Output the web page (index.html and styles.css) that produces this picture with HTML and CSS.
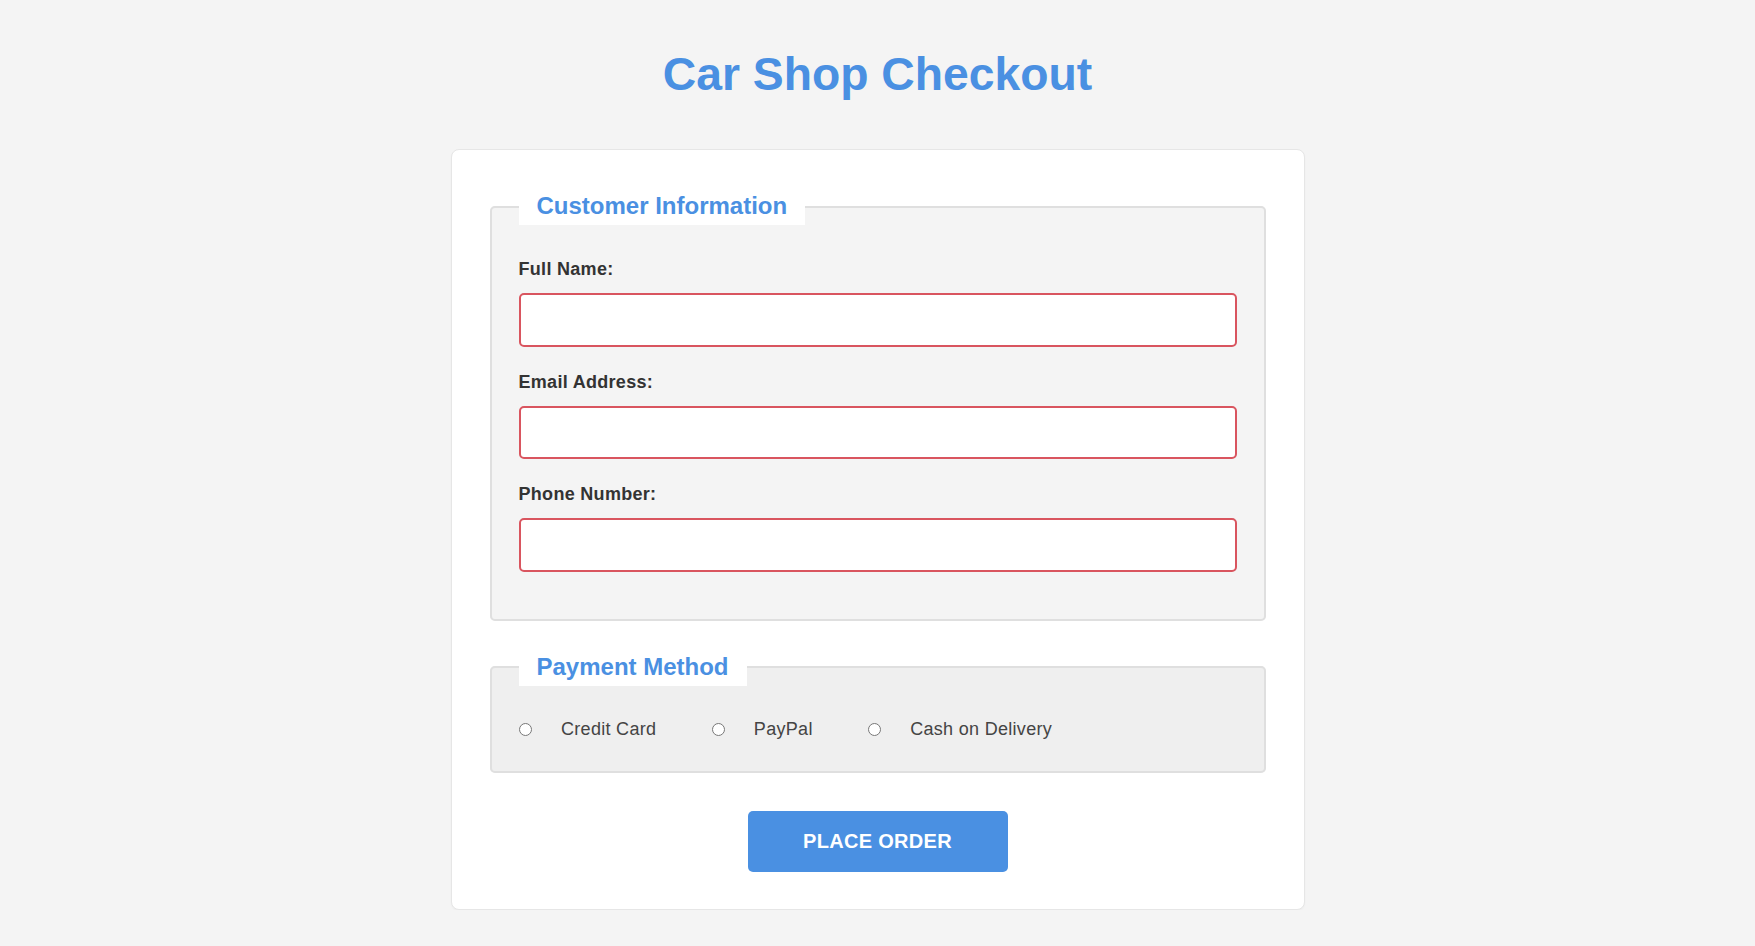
FILE: index.html
```html
<!DOCTYPE html>
<html lang="en">
<head>
<meta charset="utf-8">
<title>Car Shop Checkout</title>
<link rel="stylesheet" href="styles.css">
</head>
<body>
  <h1 class="page-title">Car Shop Checkout</h1>
  <form class="checkout-card">
    <fieldset class="section section-customer">
      <legend class="section-legend">Customer Information</legend>
      <label class="field-label" for="name">Full Name:</label>
      <input class="field-input" id="name" type="text">
      <label class="field-label" for="email">Email Address:</label>
      <input class="field-input" id="email" type="email">
      <label class="field-label" for="phone">Phone Number:</label>
      <input class="field-input" id="phone" type="tel">
    </fieldset>
    <fieldset class="section section-payment">
      <legend class="section-legend">Payment Method</legend>
      <div class="radio-row">
        <label class="radio-option"><input class="radio-input" type="radio" name="pay">Credit Card</label>
        <label class="radio-option"><input class="radio-input" type="radio" name="pay">PayPal</label>
        <label class="radio-option"><input class="radio-input" type="radio" name="pay">Cash on Delivery</label>
      </div>
    </fieldset>
    <div class="actions">
      <button class="order-button" type="button">PLACE ORDER</button>
    </div>
  </form>
</body>
</html>
```
FILE: styles.css
```css
* {
  box-sizing: border-box;
}

html, body {
  margin: 0;
  padding: 0;
}

body {
  background: #f4f4f4;
  font-family: "Liberation Sans", Arial, sans-serif;
  color: #333;
  padding-top: 48px;
}

.page-title {
  margin: 0 0 49px;
  text-align: center;
  font-size: 46.3px;
  line-height: 52px;
  font-weight: 700;
  color: #4a90e2;
}

.checkout-card {
  width: 854px;
  margin: 0 auto;
  background: #ffffff;
  border: 1px solid #e6e6e6;
  border-radius: 8px;
  padding: 38px 38px 37px;
  box-shadow: 0 1px 2px rgba(0, 0, 0, 0.03);
}

.section {
  margin: 0;
  min-width: 0;
  border: 2px solid #dfdfdf;
  border-radius: 5px;
  padding: 34px 27px 22px;
  background: #f4f4f4;
}

.section-payment {
  margin-top: 28px;
  padding: 33px 27px 31px;
  background: #efefef;
}

.section-legend {
  padding: 4px 18px 6px;
  background: #ffffff;
  font-size: 24px;
  line-height: 27px;
  font-weight: 700;
  color: #4a90e2;
}

.field-label {
  display: block;
  font-size: 18px;
  line-height: 21px;
  font-weight: 700;
  letter-spacing: 0.3px;
  color: #333;
  margin-bottom: 13px;
}

.field-input {
  display: block;
  width: 100%;
  height: 53.5px;
  margin: 0 0 25px;
  border: 2px solid #d9555f;
  border-radius: 5px;
  background: #ffffff;
  padding: 0 14px;
  font-family: inherit;
  font-size: 18px;
}

.radio-row {
  display: flex;
  align-items: center;
  gap: 55px;
}

.radio-option {
  display: flex;
  align-items: center;
  font-size: 18px;
  line-height: 21px;
  letter-spacing: 0.3px;
  color: #444;
}

.radio-input {
  width: 13px;
  height: 13px;
  margin: 0 29px 0 0.5px;
}

.actions {
  display: flex;
  justify-content: center;
  margin-top: 38px;
}

.order-button {
  width: 260px;
  height: 61px;
  border: none;
  border-radius: 5px;
  background: #4a90e2;
  color: #ffffff;
  font-family: inherit;
  font-size: 20px;
  font-weight: 700;
  letter-spacing: 0.3px;
  cursor: pointer;
}
```
